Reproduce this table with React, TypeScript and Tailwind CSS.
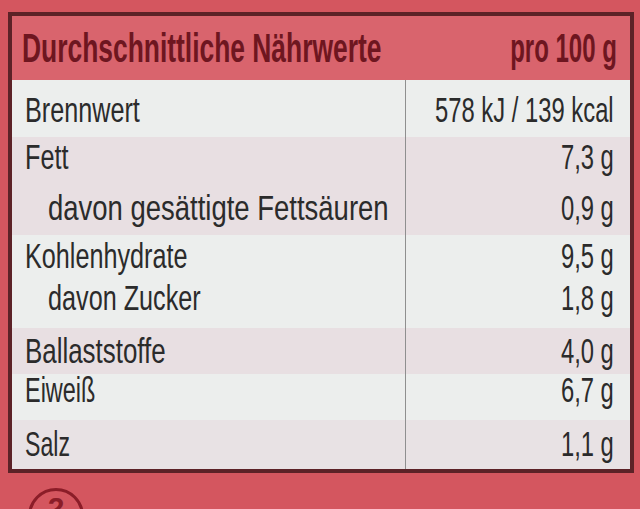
import React from "react"

type Line = { label: string; value: string; indent?: boolean; lead: string; gap?: string; squeeze?: string }

interface RowProps {
  lines: Line[]
  height: string
  pad: string
  tint: string
}

// one band of the table, label cell + value cell
function Row({ lines, height, pad, tint }: RowProps) {
  return (
    <div className={`flex ${height} ${tint}`}>
      <div className={`w-[394px] shrink-0 border-r border-[#8f8f8f] ${pad}`}>
        {lines.map((l) => (
          <div key={l.label} className={`${l.lead} ${l.gap ?? ""} ${l.indent ? "pl-[36px]" : "pl-[13px]"} whitespace-nowrap`}>
            <span className={`inline-block origin-left ${l.squeeze ?? "scale-x-[0.72]"}`}>{l.label}</span>
          </div>
        ))}
      </div>
      <div className={`min-w-0 flex-1 pr-[16px] ${pad}`}>
        {lines.map((l) => (
          <div key={l.label} className={`flex justify-end ${l.lead} ${l.gap ?? ""} whitespace-nowrap`}>
            <span className="inline-block shrink-0 origin-right scale-x-[0.68]">{l.value}</span>
          </div>
        ))}
      </div>
    </div>
  )
}

export default function App() {
  return (
    <div className="w-[640px] h-[509px] overflow-hidden bg-[#d4565f] pt-[12px] pl-[8px] font-['Liberation_Sans',Arial,sans-serif]">
      <div className="w-[626px] border-[4px] border-[#5c2227] bg-[#d9646d]">
        {/* Header */}
        <div className="flex h-[64px] items-center pl-[10px] pr-[13px] text-[40px] font-bold leading-[64px] text-[#6e1620]">
          <div className="w-[400px] shrink-0 whitespace-nowrap">
            <span className="inline-block origin-left scale-x-[0.66]">Durchschnittliche Nährwerte</span>
          </div>
          <div className="flex min-w-0 flex-1 justify-end whitespace-nowrap">
            <span className="inline-block shrink-0 origin-right scale-x-[0.6]">pro 100 g</span>
          </div>
        </div>

        {/* Body */}
        <div className="text-[35px] text-[#2b2b2b]">
          <Row
            height="h-[57px]"
            pad="pt-[10px]"
            tint="bg-[#eceeed]"
            lines={[{ label: "Brennwert", value: "578 kJ / 139 kcal", lead: "leading-[40px]" }]}
          />
          <Row
            height="h-[98px]"
            pad="pt-0"
            tint="bg-[#e8dfe2]"
            lines={[
              { label: "Fett", value: "7,3 g", lead: "leading-[40px]" },
              {
                label: "davon gesättigte Fettsäuren",
                value: "0,9 g",
                indent: true,
                lead: "leading-[42px]",
                gap: "mt-[10px]",
                squeeze: "scale-x-[0.785]",
              },
            ]}
          />
          <Row
            height="h-[93px]"
            pad="pt-[1px]"
            tint="bg-[#eceeed]"
            lines={[
              { label: "Kohlenhydrate", value: "9,5 g", lead: "leading-[40px]" },
              { label: "davon Zucker", value: "1,8 g", indent: true, lead: "leading-[40px]", gap: "mt-[2px]" },
            ]}
          />
          <Row
            height="h-[46px]"
            pad="pt-[3px]"
            tint="bg-[#e8dfe2]"
            lines={[{ label: "Ballaststoffe", value: "4,0 g", lead: "leading-[40px]", squeeze: "scale-x-[0.74]" }]}
          />
          <Row
            height="h-[46px]"
            pad="pt-0"
            tint="bg-[#eceeed]"
            lines={[{ label: "Eiweiß", value: "6,7 g", lead: "leading-[32px]", squeeze: "scale-x-[0.67]" }]}
          />
          <Row
            height="h-[49px]"
            pad="pt-[4px]"
            tint="bg-[#e8e2e4]"
            lines={[{ label: "Salz", value: "1,1 g", lead: "leading-[40px]", squeeze: "scale-x-[0.66]" }]}
          />
        </div>
      </div>

      {/* circled mark, cut off by the edge */}
      <div className="ml-[20px] mt-[15px] flex h-[56px] w-[56px] items-start justify-center rounded-full border-[3px] border-[#8b1d28] pt-[2px] text-[30px] font-bold leading-[30px] text-[#8b1d28]">
        2
      </div>
    </div>
  )
}
